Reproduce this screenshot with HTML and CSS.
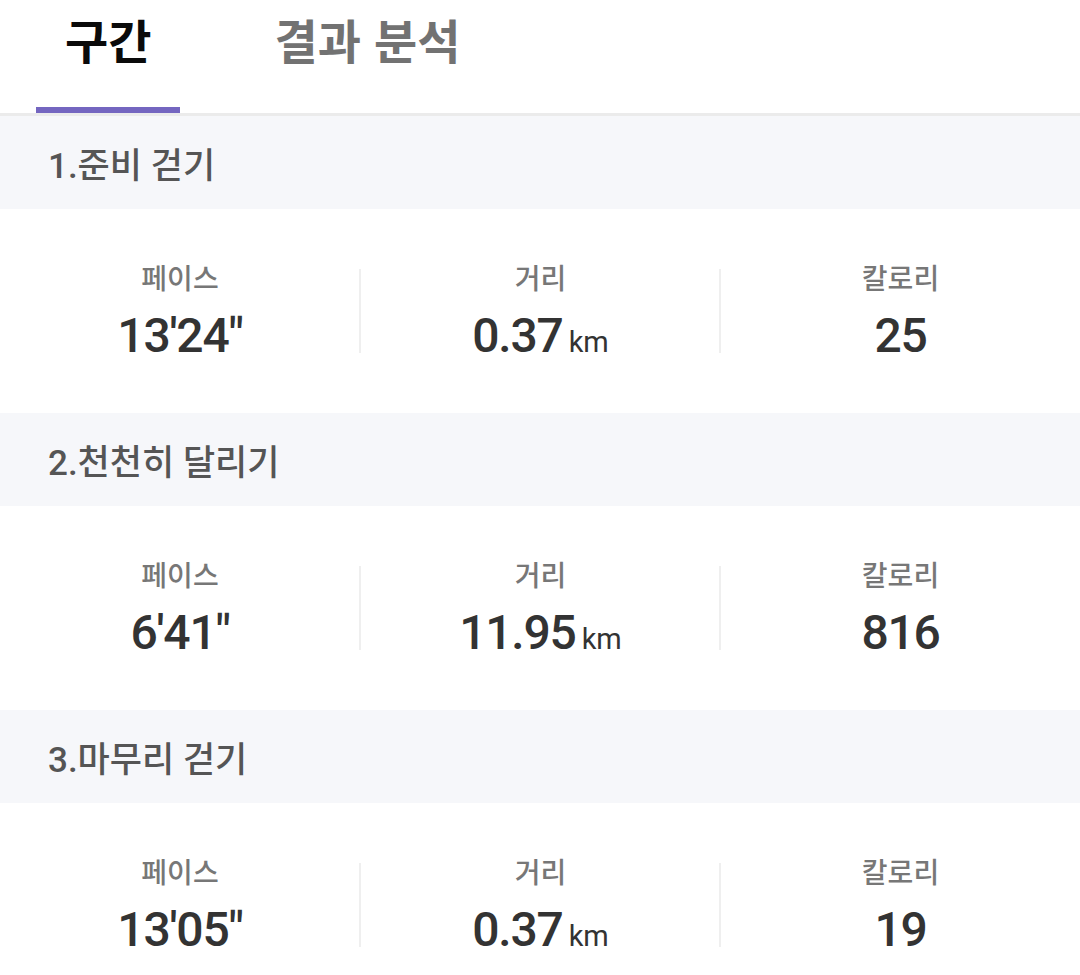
FILE: index.html
```html
<!DOCTYPE html>
<html lang="ko">
<head>
<meta charset="utf-8">
<link rel="stylesheet" href="styles.css">
</head>
<body>
<div class="tabs">
  <div class="tab active">구간</div>
  <div class="tab">결과 분석</div>
</div>
<div class="section-head">1.준비 걷기</div>
<div class="stats">
  <div class="stat"><div class="label">페이스</div><div class="value">13'24"</div></div>
  <div class="stat"><div class="label">거리</div><div class="value">0.37<span class="unit">km</span></div></div>
  <div class="stat"><div class="label">칼로리</div><div class="value">25</div></div>
</div>
<div class="section-head">2.천천히 달리기</div>
<div class="stats">
  <div class="stat"><div class="label">페이스</div><div class="value">6'41"</div></div>
  <div class="stat"><div class="label">거리</div><div class="value">11.95<span class="unit">km</span></div></div>
  <div class="stat"><div class="label">칼로리</div><div class="value">816</div></div>
</div>
<div class="section-head">3.마무리 걷기</div>
<div class="stats">
  <div class="stat"><div class="label">페이스</div><div class="value">13'05"</div></div>
  <div class="stat"><div class="label">거리</div><div class="value">0.37<span class="unit">km</span></div></div>
  <div class="stat"><div class="label">칼로리</div><div class="value">19</div></div>
</div>
</body>
</html>
```
FILE: styles.css
```css
html, body {
  margin: 0;
  padding: 0;
  background: #ffffff;
  font-family: Roboto, "Noto Sans CJK KR", sans-serif;
}
.tabs {
  display: flex;
  gap: 65px;
  padding-left: 36px;
  height: 113px;
  border-bottom: 3px solid #ebebeb;
}
.tab {
  box-sizing: border-box;
  height: 113px;
  padding: 8px 29px 0;
  font-size: 47px;
  line-height: 62px;
  font-weight: 700;
  color: #727272;
  font-family: "Noto Sans CJK KR", sans-serif;
}
.tab.active {
  color: #0a0a0a;
  border-bottom: 6px solid #7466c0;
}
.section-head {
  height: 93px;
  background: #f6f7fa;
  box-sizing: border-box;
  padding-left: 48px;
  display: flex;
  align-items: center;
  font-size: 35px;
  font-weight: 500;
  color: #555555;
}
.stats {
  display: grid;
  grid-template-columns: repeat(3, 1fr);
  height: 204px;
  box-sizing: border-box;
  padding-top: 60px;
  align-items: start;
}
.stat {
  display: flex;
  flex-direction: column;
  align-items: center;
  height: 84px;
}
.stat + .stat {
  border-left: 2px solid #efefef;
  margin-left: -1px;
}
.label {
  font-size: 28px;
  line-height: 40px;
  margin-top: -12px;
  color: #777777;
  font-weight: 500;
  font-family: "Noto Sans CJK KR", sans-serif;
}
.value {
  font-size: 48px;
  line-height: 56px;
  margin-top: 11px;
  letter-spacing: -1.2px;
  color: #333333;
  font-weight: 500;
  white-space: nowrap;
}
.unit {
  font-size: 29px;
  margin-left: 6px;
  letter-spacing: 0;
  font-weight: 400;
}
```
